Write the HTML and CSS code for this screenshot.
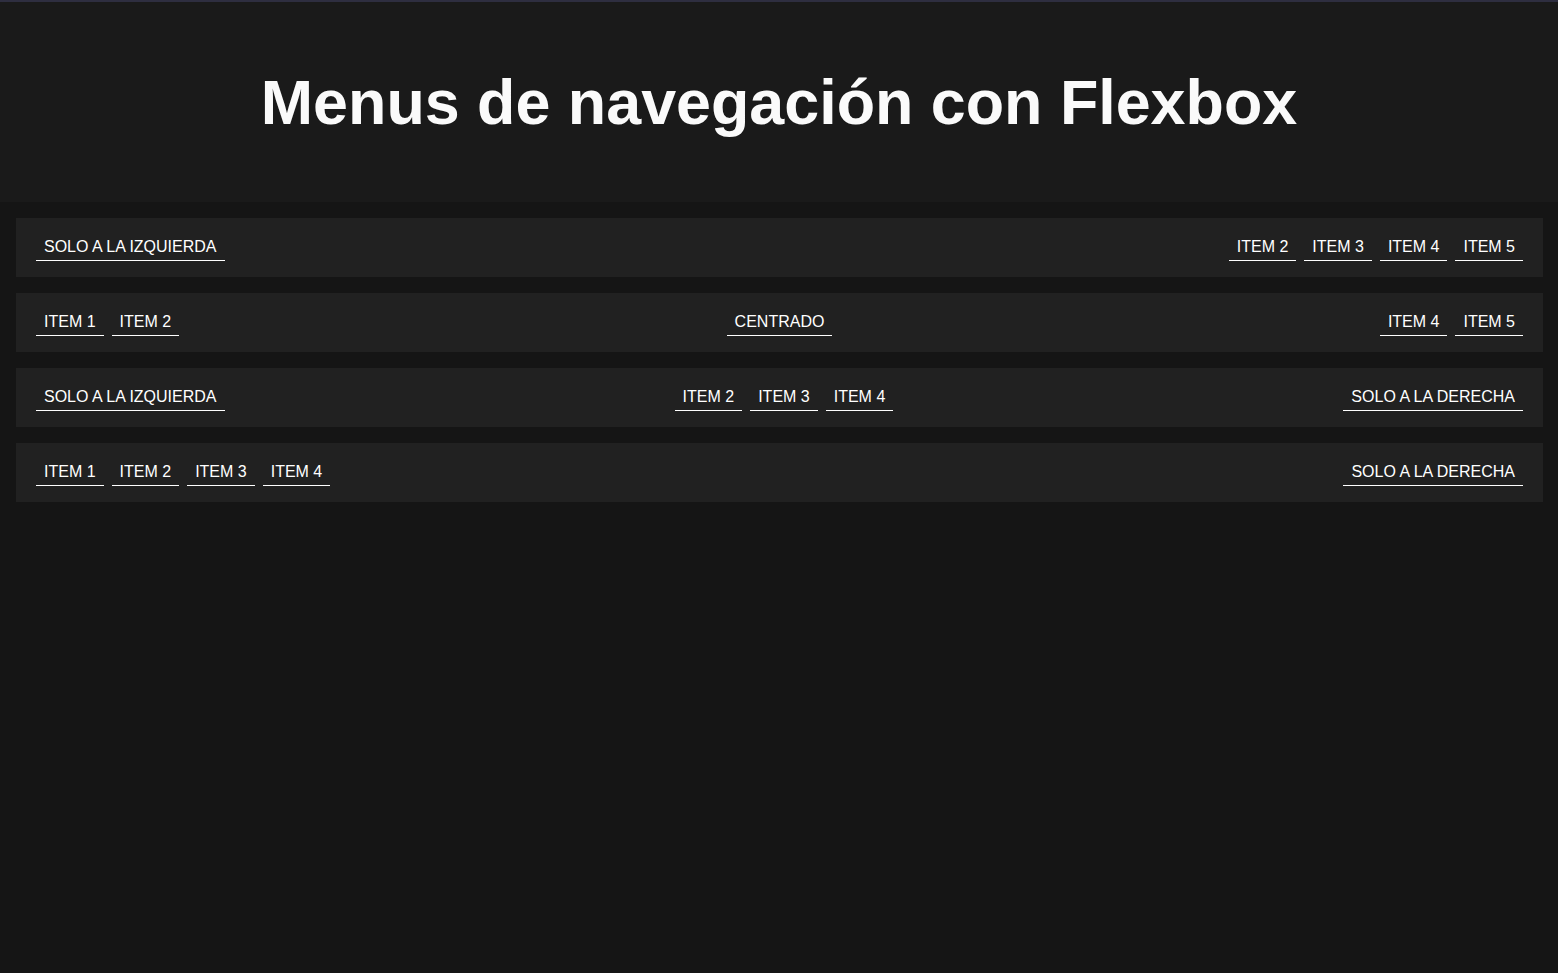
FILE: index.html
```html
<!DOCTYPE html>
<html lang="es">
<head>
<meta charset="utf-8">
<title>Menus de navegación con Flexbox</title>
<link rel="stylesheet" href="styles.css">
</head>
<body>
<header class="header">
  <h1 class="title">Menus de navegación con Flexbox</h1>
</header>
<main class="main">
  <nav class="menu">
    <a class="link push-right" href="#">Solo a la izquierda</a>
    <a class="link" href="#">Item 2</a>
    <a class="link" href="#">Item 3</a>
    <a class="link" href="#">Item 4</a>
    <a class="link" href="#">Item 5</a>
  </nav>
  <nav class="menu">
    <a class="link" href="#">Item 1</a>
    <a class="link" href="#">Item 2</a>
    <a class="link push-both" href="#">Centrado</a>
    <a class="link" href="#">Item 4</a>
    <a class="link" href="#">Item 5</a>
  </nav>
  <nav class="menu">
    <a class="link" href="#">Solo a la izquierda</a>
    <div class="group push-both">
      <a class="link" href="#">Item 2</a>
      <a class="link" href="#">Item 3</a>
      <a class="link" href="#">Item 4</a>
    </div>
    <a class="link" href="#">Solo a la derecha</a>
  </nav>
  <nav class="menu">
    <a class="link" href="#">Item 1</a>
    <a class="link" href="#">Item 2</a>
    <a class="link" href="#">Item 3</a>
    <a class="link" href="#">Item 4</a>
    <a class="link push-left" href="#">Solo a la derecha</a>
  </nav>
</main>
</body>
</html>
```

FILE: styles.css
```css
* {
  box-sizing: border-box;
}

html, body {
  margin: 0;
  padding: 0;
}

body {
  background: #151515;
  color: #fff;
  font-family: "Liberation Sans", Arial, sans-serif;
  min-height: 100vh;
  border-top: 2px solid #2e2e40;
}

.header {
  background: #1a1a1a;
  height: 200px;
  display: flex;
  align-items: center;
  justify-content: center;
}

.title {
  margin: 0;
  font-size: 62.8px;
  font-weight: 700;
  color: #fafafa;
}

.main {
  padding: 16px 15px 16px 16px;
  display: flex;
  flex-direction: column;
  gap: 16px;
}

.menu {
  background: #212121;
  display: flex;
  align-items: center;
  gap: 8px;
  padding: 16px 20px;
}

.group {
  display: flex;
  gap: 8px;
}

.link {
  color: #fff;
  text-decoration: none;
  text-transform: uppercase;
  font-size: 16px;
  line-height: 18px;
  padding: 4px 8px;
  border-bottom: 1px solid #fff;
}

.push-right {
  margin-right: auto;
}

.push-left {
  margin-left: auto;
}

.push-both {
  margin-left: auto;
  margin-right: auto;
}
```
